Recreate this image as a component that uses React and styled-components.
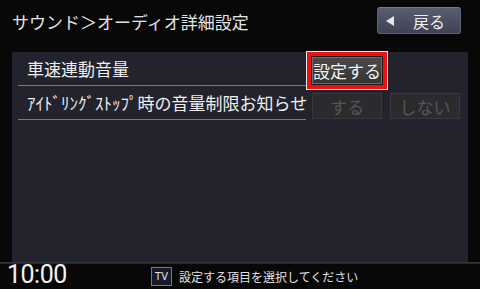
import React from "react";
import styled, { createGlobalStyle } from "styled-components";

const GlobalStyle = createGlobalStyle`
  html, body {
    margin: 0;
    padding: 0;
    background: #080808;
  }
  body {
    width: 480px;
    height: 289px;
    overflow: hidden;
    font-family: "Noto Sans CJK JP", "Noto Sans", sans-serif;
  }
`;

const Screen = styled.div`
  width: 480px;
  height: 289px;
  display: flex;
  flex-direction: column;
  background: #080808;
`;

const Header = styled.div`
  height: 52px;
  display: flex;
  justify-content: space-between;
  align-items: flex-start;
  padding: 0 19px 0 12px;
  box-sizing: border-box;
`;

const Title = styled.div`
  margin-top: 13px;
  font-size: 17px;
  line-height: 17px;
  color: #e4e4e4;
  white-space: nowrap;
`;

const BackButton = styled.button`
  margin-top: 7px;
  width: 84px;
  height: 27px;
  display: flex;
  align-items: center;
  padding: 0 0 0 8px;
  box-sizing: border-box;
  border: 1px solid #5f6276;
  border-top-color: #767a8e;
  border-radius: 3px;
  background: linear-gradient(#5a5d71, #3f4254);
  color: #eeeeee;
  font-family: inherit;
  font-size: 16px;
  line-height: 16px;
`;

const Triangle = styled.span`
  width: 0;
  height: 0;
  border-top: 5px solid transparent;
  border-bottom: 5px solid transparent;
  border-right: 8px solid #e6e6e6;
  margin-right: 19px;
`;

const Panel = styled.div`
  margin: 0 12px;
  height: 210px;
  background: #22232d;
  padding: 0 6px;
  display: flex;
  flex-direction: column;
`;

const Row = styled.div`
  height: 34px;
  display: flex;
  align-items: ${(p) => (p.$low ? "flex-end" : "center")};
`;

const Label = styled.div`
  width: 288px;
  height: 34px;
  box-sizing: border-box;
  border-bottom: 1px solid #7a7b82;
  padding-left: 9px;
  display: flex;
  align-items: center;
  font-size: 17px;
  color: #eeeeee;
  white-space: nowrap;
  flex-shrink: 0;
`;

const Focus = styled.div`
  margin-top: 3px;
  border: 1px solid #e8e8e8;
  display: flex;
`;

const FocusRing = styled.div`
  border: 4px solid #ee1111;
  padding: 1px;
  background: #1a1a1a;
  display: flex;
`;

const Choice = styled.div`
  width: 70px;
  height: ${(p) => (p.$active ? 27 : 26)}px;
  box-sizing: border-box;
  display: flex;
  align-items: center;
  justify-content: center;
  font-size: 17px;
  border: 1px solid ${(p) => (p.$active ? "#6c6c6c" : "#37383c")};
  background: ${(p) =>
    p.$active ? "linear-gradient(#4a4a4a, #343434)" : "#2b2b2e"};
  color: ${(p) => (p.$active ? "#f2f2f2" : "#55565b")};
`;

const Choices = styled.div`
  display: flex;
  gap: 8px;
  margin: 0 0 1px 6px;
`;

const Divider = styled.div`
  height: 2px;
  background: linear-gradient(#3a3a3e, #202022);
`;

const StatusBar = styled.div`
  flex: 1;
  min-height: 0;
  display: flex;
  align-items: flex-end;
  padding-left: 7px;
`;

const Clock = styled.div`
  font-family: Roboto, "Liberation Sans", sans-serif;
  font-size: 25px;
  letter-spacing: -0.5px;
  color: #f2f2f2;
  width: 144px;
  flex-shrink: 0;
`;

const Note = styled.div`
  display: flex;
  align-items: center;
  height: 25px;
`;

const Badge = styled.div`
  width: 21px;
  height: 19px;
  box-sizing: border-box;
  border: 1px solid #74788a;
  background: #161a2a;
  color: #e8e8e8;
  font-family: "DejaVu Sans Condensed", "Liberation Sans", sans-serif;
  font-size: 11px;
  display: flex;
  align-items: center;
  justify-content: center;
  margin-right: 7px;
`;

const Message = styled.div`
  font-size: 12px;
  color: #e0e0e0;
  white-space: nowrap;
`;

export default function App() {
  return (
    <Screen>
      <GlobalStyle />
      <Header>
        <Title>サウンド＞オーディオ詳細設定</Title>
        <BackButton>
          <Triangle />
          戻る
        </BackButton>
      </Header>
      <Panel>
        <Row>
          <Label>車速連動音量</Label>
          <Focus>
            <FocusRing>
              <Choice $active>設定する</Choice>
            </FocusRing>
          </Focus>
        </Row>
        <Row $low>
          <Label>ｱｲﾄﾞﾘﾝｸﾞｽﾄｯﾌﾟ時の音量制限お知らせ</Label>
          <Choices>
            <Choice>する</Choice>
            <Choice>しない</Choice>
          </Choices>
        </Row>
      </Panel>
      <Divider />
      <StatusBar>
        <Clock>10:00</Clock>
        <Note>
          <Badge>TV</Badge>
          <Message>設定する項目を選択してください</Message>
        </Note>
      </StatusBar>
    </Screen>
  );
}
